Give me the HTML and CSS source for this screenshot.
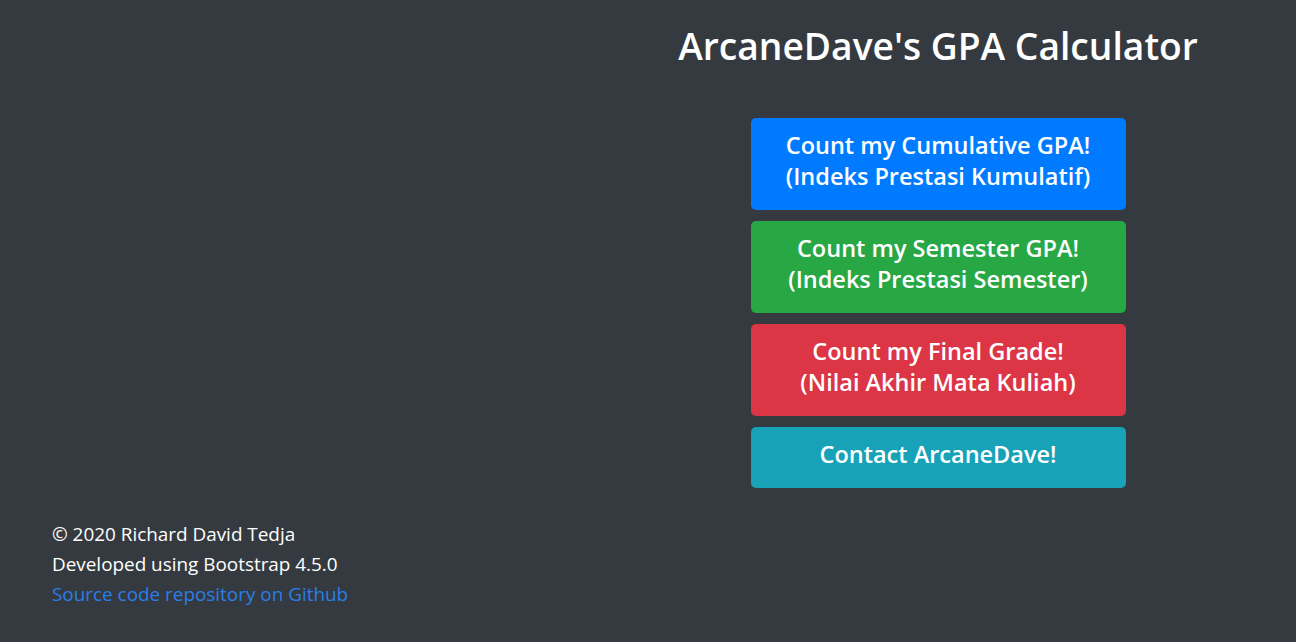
FILE: index.html
```html
<!DOCTYPE html>
<html lang="en">
<head>
<meta charset="utf-8">
<title>ArcaneDave's GPA Calculator</title>
<link rel="stylesheet" href="styles.css">
</head>
<body>
<div class="page">
  <main class="main">
    <div class="spacer"></div>
    <section class="panel">
      <h1 class="title">ArcaneDave's GPA Calculator</h1>
      <div class="buttons">
        <a class="btn btn-blue" href="#">Count my Cumulative GPA!<br>(Indeks Prestasi Kumulatif)</a>
        <a class="btn btn-green" href="#">Count my Semester GPA!<br>(Indeks Prestasi Semester)</a>
        <a class="btn btn-red" href="#">Count my Final Grade!<br>(Nilai Akhir Mata Kuliah)</a>
        <a class="btn btn-teal" href="#">Contact ArcaneDave!</a>
      </div>
    </section>
  </main>
  <footer class="footer">
    <p>© 2020 Richard David Tedja</p>
    <p>Developed using Bootstrap 4.5.0</p>
    <p><a class="link" href="#">Source code repository on Github</a></p>
  </footer>
</div>
</body>
</html>
```
FILE: styles.css
```css
html, body {
  margin: 0;
  padding: 0;
  background: #343a40;
  color: #ffffff;
  font-family: "Open Sans", "Noto Sans", "Liberation Sans", sans-serif;
}
.page {
  height: 642px;
  display: flex;
  flex-direction: column;
}
.main {
  display: grid;
  grid-template-columns: 1fr 716px;
  padding-top: 22px;
}
.panel {
  display: flex;
  flex-direction: column;
  align-items: center;
}
.title {
  margin: 0;
  font-size: 37.2px;
  font-weight: 600;
  line-height: 48px;
  letter-spacing: 0;
}
.buttons {
  margin-top: 48px;
  width: 375px;
  display: flex;
  flex-direction: column;
  gap: 11px;
}
.btn {
  display: block;
  text-align: center;
  color: #fff;
  text-decoration: none;
  font-size: 23.5px;
  font-weight: 600;
  line-height: 31px;
  padding: 12px 6px 18px;
  border-radius: 5px;
}
.btn-blue { background: #007bff; }
.btn-green { background: #28a745; }
.btn-red { background: #dc3545; }
.btn-teal { background: #17a2b8; }
.footer {
  margin-top: auto;
  padding: 0 0 33px 52px;
  font-size: 18.9px;
  line-height: 30px;
}
.footer p {
  margin: 0;
}
.link {
  color: #2a7ee8;
  text-decoration: none;
}
```
